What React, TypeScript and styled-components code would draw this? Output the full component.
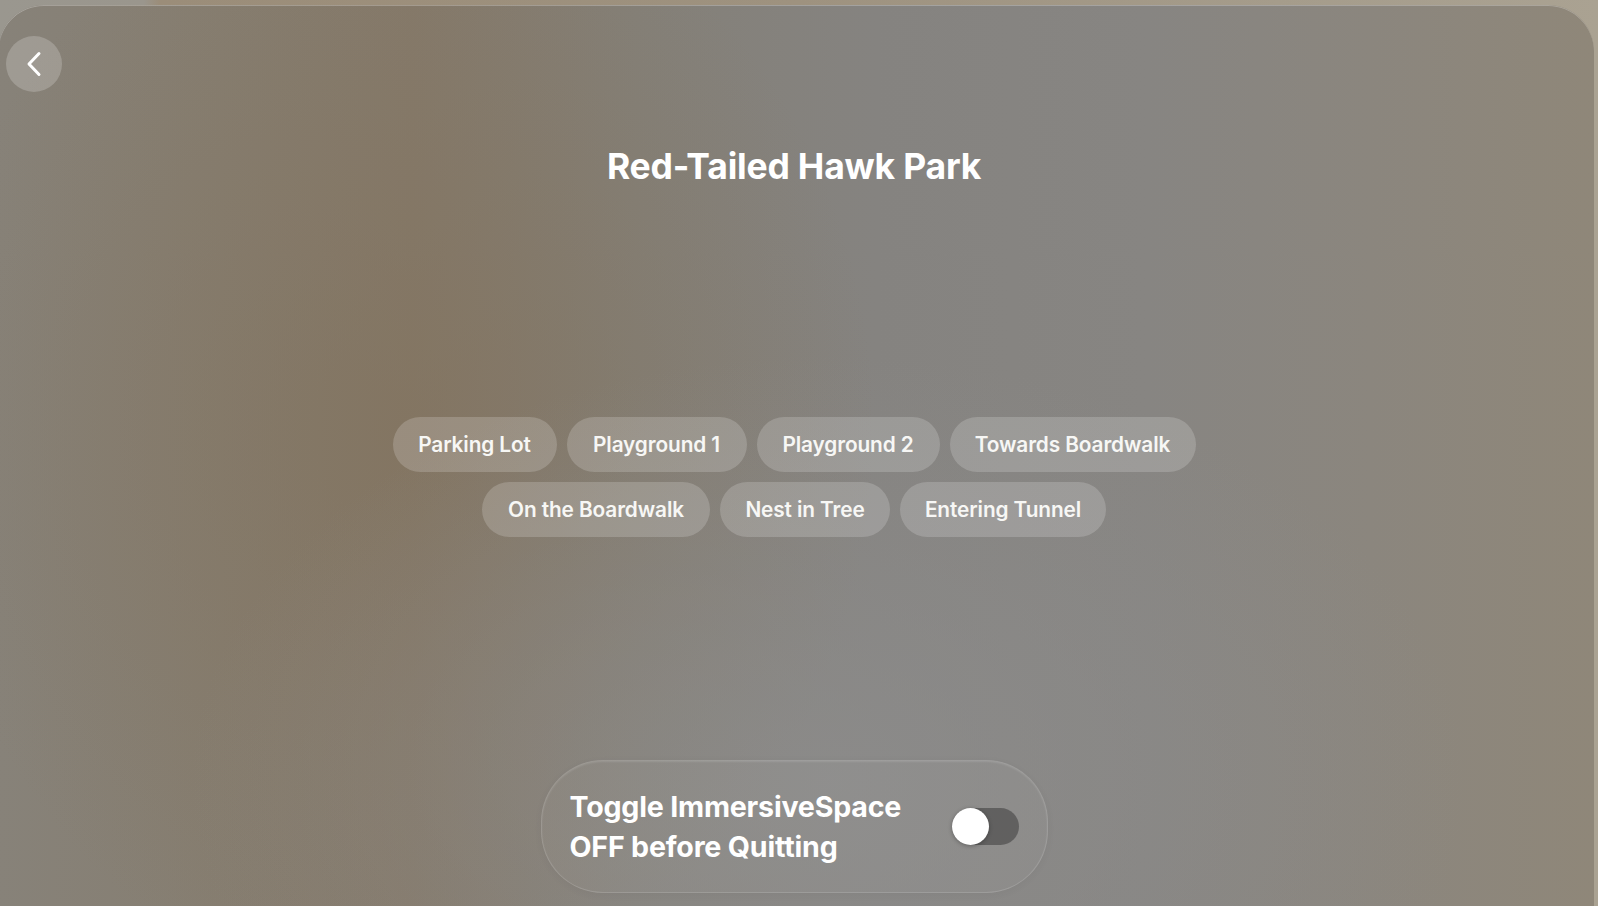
import React, { useState } from "react";
import styled, { createGlobalStyle } from "styled-components";

const GlobalStyle = createGlobalStyle`
  html, body, #root {
    margin: 0;
    padding: 0;
    width: 100%;
    height: 100%;
  }
  body {
    overflow: hidden;
    font-family: Inter, "Noto Sans", "Liberation Sans", sans-serif;
    -webkit-font-smoothing: antialiased;
  }
`;

const Backdrop = styled.div`
  width: 100vw;
  height: 100vh;
  overflow: hidden;
  background: linear-gradient(
    to right,
    #9a978f 0%,
    #9a968d 9%,
    #9b8d79 10%,
    #9e927f 50%,
    #a59c8b 80%,
    #aaa292 100%
  );
`;

const Window = styled.main`
  box-sizing: border-box;
  margin: 5px 4px 0 -2px;
  height: calc(100% + 40px);
  border-radius: 46px;
  padding: 31px 4px 0 0;
  display: flex;
  flex-direction: column;
  align-items: center;
  overflow: hidden;
  background:
    radial-gradient(ellipse 40% 45% at 52% 82%, rgba(142, 142, 142, 0.7), rgba(142, 142, 142, 0) 100%),
    radial-gradient(ellipse 30% 60% at 25% 45%, rgba(130, 114, 92, 0.6), rgba(130, 114, 92, 0) 100%),
    linear-gradient(
      to right,
      #878279 0%,
      #867e71 14%,
      #857a6b 26%,
      #848078 40%,
      #858380 55%,
      #878582 72%,
      #8b867e 86%,
      #8f8779 100%
    );
  box-shadow: inset 0 1px 0 rgba(255, 255, 255, 0.25), inset 1px 0 0 rgba(255, 255, 255, 0.12);
`;

const TopBar = styled.div`
  align-self: stretch;
  height: 56px;
  padding-left: 8px;
  display: flex;
  align-items: center;
`;

const BackButton = styled.button`
  width: 56px;
  height: 56px;
  border-radius: 50%;
  border: none;
  padding: 0;
  display: flex;
  align-items: center;
  justify-content: center;
  color: #ffffff;
  background: rgba(255, 255, 255, 0.2);
  cursor: pointer;
`;

const Title = styled.h1`
  margin: 53px 0 0;
  height: 44px;
  line-height: 44px;
  font-size: 35.5px;
  font-weight: 700;
  letter-spacing: -0.2px;
  color: #ffffff;
  text-align: center;
`;

const Destinations = styled.div`
  margin-top: 228px;
  display: flex;
  flex-direction: column;
  align-items: center;
  gap: 10px;
`;

const ChipRow = styled.div`
  display: flex;
  gap: 10px;
`;

const Chip = styled.button<{ $width: number }>`
  box-sizing: border-box;
  width: ${(p) => p.$width}px;
  height: 55px;
  border-radius: 28px;
  border: none;
  padding: 0;
  font-family: inherit;
  font-size: 20.8px;
  font-weight: 600;
  letter-spacing: -0.1px;
  color: #f7f7f5;
  background: rgba(255, 255, 255, 0.18);
  cursor: pointer;
`;

const TogglePanel = styled.section`
  box-sizing: border-box;
  margin-top: 223px;
  width: 507px;
  height: 133px;
  border-radius: 62px;
  padding: 0 28px 0 28px;
  display: flex;
  align-items: center;
  justify-content: space-between;
  background: rgba(255, 255, 255, 0.035);
  border: 1px solid rgba(255, 255, 255, 0.14);
  box-shadow: inset 0 1px 2px rgba(255, 255, 255, 0.12), 0 2px 8px rgba(0, 0, 0, 0.04);
`;

const ToggleLabel = styled.p`
  margin: 0;
  font-size: 28.6px;
  font-weight: 700;
  line-height: 40px;
  letter-spacing: -0.2px;
  color: #ffffff;
`;

const Switch = styled.button<{ $on: boolean }>`
  box-sizing: border-box;
  width: 67px;
  height: 37px;
  border-radius: 19px;
  border: none;
  padding: 0;
  display: flex;
  align-items: center;
  justify-content: ${(p) => (p.$on ? "flex-end" : "flex-start")};
  background: ${(p) => (p.$on ? "#34c759" : "rgba(60, 60, 60, 0.55)")};
  cursor: pointer;
`;

const Knob = styled.span`
  width: 37px;
  height: 37px;
  border-radius: 50%;
  background: #ffffff;
  box-shadow: 0 1px 4px rgba(0, 0, 0, 0.3);
`;

const rows: { label: string; width: number }[][] = [
  [
    { label: "Parking Lot", width: 164 },
    { label: "Playground 1", width: 180 },
    { label: "Playground 2", width: 183 },
    { label: "Towards Boardwalk", width: 246 },
  ],
  [
    { label: "On the Boardwalk", width: 228 },
    { label: "Nest in Tree", width: 170 },
    { label: "Entering Tunnel", width: 206 },
  ],
];

function BackChevron() {
  return (
    <svg width="16" height="26" viewBox="0 0 16 26" fill="none">
      <polyline
        points="13,2.5 3,13 13,23.5"
        stroke="currentColor"
        strokeWidth="3"
        strokeLinecap="round"
        strokeLinejoin="round"
      />
    </svg>
  );
}

export default function App() {
  const [immersive, setImmersive] = useState(false);

  return (
    <>
      <GlobalStyle />
      <Backdrop>
        <Window>
          <TopBar>
            <BackButton aria-label="Back">
              <BackChevron />
            </BackButton>
          </TopBar>
          <Title>Red-Tailed Hawk Park</Title>
          <Destinations>
            {rows.map((row, i) => (
              <ChipRow key={i}>
                {row.map((c) => (
                  <Chip key={c.label} $width={c.width}>
                    {c.label}
                  </Chip>
                ))}
              </ChipRow>
            ))}
          </Destinations>
          <TogglePanel>
            <ToggleLabel>
              Toggle ImmersiveSpace
              <br />
              OFF before Quitting
            </ToggleLabel>
            <Switch
              $on={immersive}
              aria-pressed={immersive}
              onClick={() => setImmersive((v) => !v)}
            >
              <Knob />
            </Switch>
          </TogglePanel>
        </Window>
      </Backdrop>
    </>
  );
}
